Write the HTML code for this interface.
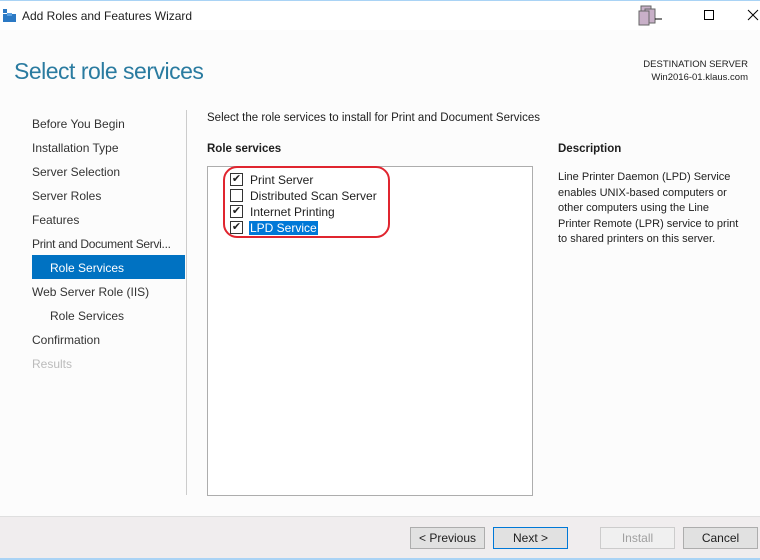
<!DOCTYPE html>
<html><head><style>
*{margin:0;padding:0;box-sizing:border-box}
body{width:760px;height:560px;overflow:hidden;background:#fcfcfc;font-family:"Liberation Sans",sans-serif;font-size:12px;color:#1e1e1e;position:relative}
.a{position:absolute;white-space:nowrap}
.nav{left:32px;font-size:12px;color:#333}
.btn{position:absolute;top:527px;width:75px;height:22px;border:1px solid #adadad;background:#e1e1e1;text-align:center;line-height:20px;font-size:12px}
.cb{position:absolute;left:230px;width:13px;height:13px;border:1px solid #333;background:#fff;font-size:11px;line-height:11px;text-align:center}
.it{left:250px;font-size:12px}
</style></head><body>
<div class="a" style="left:0;top:0;width:760px;height:1px;background:#a9d3f5"></div>
<div class="a" style="left:0;top:1px;width:760px;height:29px;background:#fff"></div>
<svg class="a" style="left:3px;top:9px" width="14" height="14"><rect x="0" y="0" width="4" height="4" fill="#2b79c4"/><rect x="0" y="5" width="13" height="8" fill="#2b79c4"/><rect x="4" y="4" width="5" height="3" fill="#5aa0e0"/></svg>
<div class="a" style="left:22px;top:9px;font-size:12px">Add Roles and Features Wizard</div>
<svg class="a" style="left:638px;top:5px" width="26" height="22"><rect x="3" y="1" width="10" height="14" fill="#c8b0c8" stroke="#666"/><rect x="7" y="4" width="10" height="14" fill="#c8b0c8" stroke="#666"/><rect x="1" y="6" width="10" height="14" fill="#c8b0c8" stroke="#666"/><line x1="17" y1="14" x2="24" y2="14" stroke="#000"/></svg>
<div class="a" style="left:704px;top:10px;width:10px;height:10px;border:1px solid #000"></div>
<svg class="a" style="left:747px;top:9px" width="12" height="12"><path d="M1 1L11 11M11 1L1 11" stroke="#000"/></svg>
<div class="a" style="left:14px;top:58px;font-size:23px;color:#2a7ba0;letter-spacing:-0.5px">Select role services</div>
<div class="a" style="right:12px;top:58px;font-size:9.5px;text-align:right;line-height:13px">DESTINATION SERVER<br>Win2016-01.klaus.com</div>
<div class="a nav" style="top:117px">Before You Begin</div>
<div class="a nav" style="top:141px">Installation Type</div>
<div class="a nav" style="top:165px">Server Selection</div>
<div class="a nav" style="top:189px">Server Roles</div>
<div class="a nav" style="top:213px">Features</div>
<div class="a nav" style="top:237px;letter-spacing:-0.3px">Print and Document Servi...</div>
<div class="a" style="left:32px;top:255px;width:153px;height:24px;background:#0072c2"></div>
<div class="a nav" style="left:50px;top:261px;color:#fff">Role Services</div>
<div class="a nav" style="top:285px">Web Server Role (IIS)</div>
<div class="a nav" style="left:50px;top:309px">Role Services</div>
<div class="a nav" style="top:333px">Confirmation</div>
<div class="a nav" style="top:357px;color:#bbb">Results</div>
<div class="a" style="left:186px;top:110px;width:1px;height:385px;background:#ccc"></div>
<div class="a" style="left:207px;top:112px;font-size:11.5px">Select the role services to install for Print and Document Services</div>
<div class="a" style="left:207px;top:143px;font-weight:bold;font-size:11.5px">Role services</div>
<div class="a" style="left:558px;top:143px;font-weight:bold;font-size:11.5px">Description</div>
<div class="a" style="left:558px;top:170px;font-size:11px;line-height:15.5px">Line Printer Daemon (LPD) Service<br>enables UNIX-based computers or<br>other computers using the Line<br>Printer Remote (LPR) service to print<br>to shared printers on this server.</div>
<div class="a" style="left:207px;top:166px;width:326px;height:330px;border:1px solid #adadad;background:#fff"></div>
<div class="cb" style="top:173px">✔</div><div class="a it" style="top:173px">Print Server</div>
<div class="cb" style="top:189px"></div><div class="a it" style="top:189px">Distributed Scan Server</div>
<div class="cb" style="top:205px">✔</div><div class="a it" style="top:205px">Internet Printing</div>
<div class="cb" style="top:221px">✔</div><div class="a it" style="top:221px;background:#0078d7;color:#fff;padding:0 1px;left:249px">LPD Service</div>
<div class="a" style="left:223px;top:166px;width:167px;height:72px;border:2px solid #e0252f;border-radius:14px"></div>
<div class="a" style="left:0;top:516px;width:760px;height:42px;background:#f0edee;border-top:1px solid #dfdfdf"></div>
<div class="a" style="left:0;top:558px;width:760px;height:2px;background:#a9d3f5"></div>
<div class="btn" style="left:410px">&lt; Previous</div>
<div class="btn" style="left:493px;border-color:#0078d7">Next &gt;</div>
<div class="btn" style="left:600px;border-color:#ccc;background:#f0f0f0;color:#a0a0a0">Install</div>
<div class="btn" style="left:683px">Cancel</div>
</body></html>
